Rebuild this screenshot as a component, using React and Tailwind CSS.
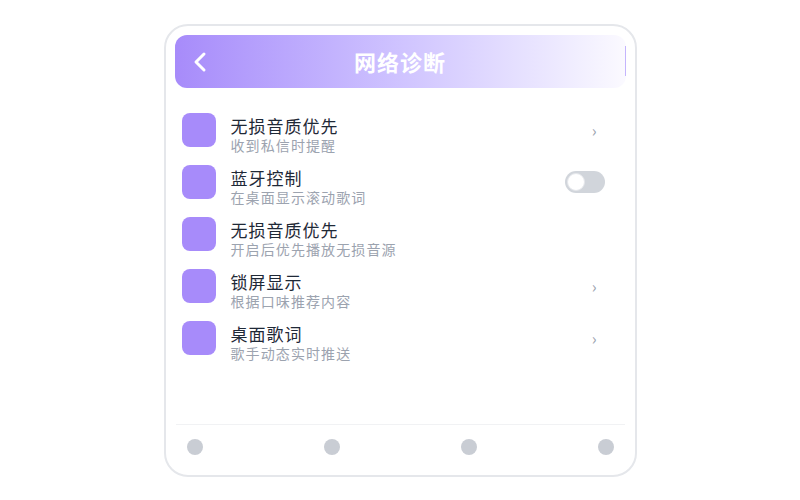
import React from "react";

const rows = [
  { t: "无损音质优先", s: "收到私信时提醒", r: "chev" },
  { t: "蓝牙控制", s: "在桌面显示滚动歌词", r: "toggle" },
  { t: "无损音质优先", s: "开启后优先播放无损音源", r: null },
  { t: "锁屏显示", s: "根据口味推荐内容", r: "chev" },
  { t: "桌面歌词", s: "歌手动态实时推送", r: "chev" },
];

export default function App() {
  return (
    <div
      className="w-[800px] h-[500px] bg-white flex justify-center pt-[24px]"
      style={{ fontFamily: '"Noto Sans CJK SC", "Noto Sans", sans-serif' }}
    >
      <div className="w-[473px] h-[453px] border-2 border-[#e5e7eb] rounded-[24px] bg-white flex flex-col px-[9px] pt-[9px] pb-[20px]">
        <div className="h-[53px] rounded-[12px] bg-gradient-to-r from-[#a78bfa] to-[#fbfaff] flex items-center relative px-[16px]">
          <svg width="14" height="22" viewBox="0 0 14 22" className="ml-[2px]">
            <path d="M11 3 L3 11 L11 19" stroke="white" strokeWidth="3" fill="none" strokeLinecap="round" strokeLinejoin="round" />
          </svg>
          <div className="absolute inset-0 flex items-center justify-center text-white text-[22px] font-bold tracking-[1px]">
            网络诊断
          </div>
          <div className="absolute right-0 top-[11px] w-[1px] h-[30px] bg-[#c4b5fd]" />
        </div>
        <div className="flex flex-col mt-[25px] px-[7px] gap-[18px]">
          {rows.map((r, i) => (
            <div key={i} className="flex items-center h-[34px]">
              <div className="w-[34px] h-[34px] rounded-[8px] bg-[#a78bfa] shrink-0" />
              <div className="ml-[15px] flex flex-col flex-1 mt-[9px]">
                <div className="text-[17px] leading-[20px] text-[#1f2937] tracking-[1px]">{r.t}</div>
                <div className="text-[14px] leading-[18px] text-[#9ca3af] tracking-[1.1px]">{r.s}</div>
              </div>
              {r.r === "chev" && (
                <div className="text-[#9ca3af] text-[16px] mr-[22px]">›</div>
              )}
              {r.r === "toggle" && (
                <div className="w-[40px] h-[22px] rounded-full bg-[#d1d5db] mr-[14px] flex items-center px-[2px]">
                  <div className="w-[18px] h-[18px] rounded-full bg-white border border-[#e5e7eb]" />
                </div>
              )}
            </div>
          ))}
        </div>
        <div className="flex-1" />
        <div className="border-t border-[#f1f2f4] mx-[1px] pt-[14px] px-[11px] flex justify-between">
          {[0, 1, 2, 3].map((i) => (
            <div key={i} className="w-[16px] h-[16px] rounded-full bg-[#c9cdd4]" />
          ))}
        </div>
      </div>
    </div>
  );
}
